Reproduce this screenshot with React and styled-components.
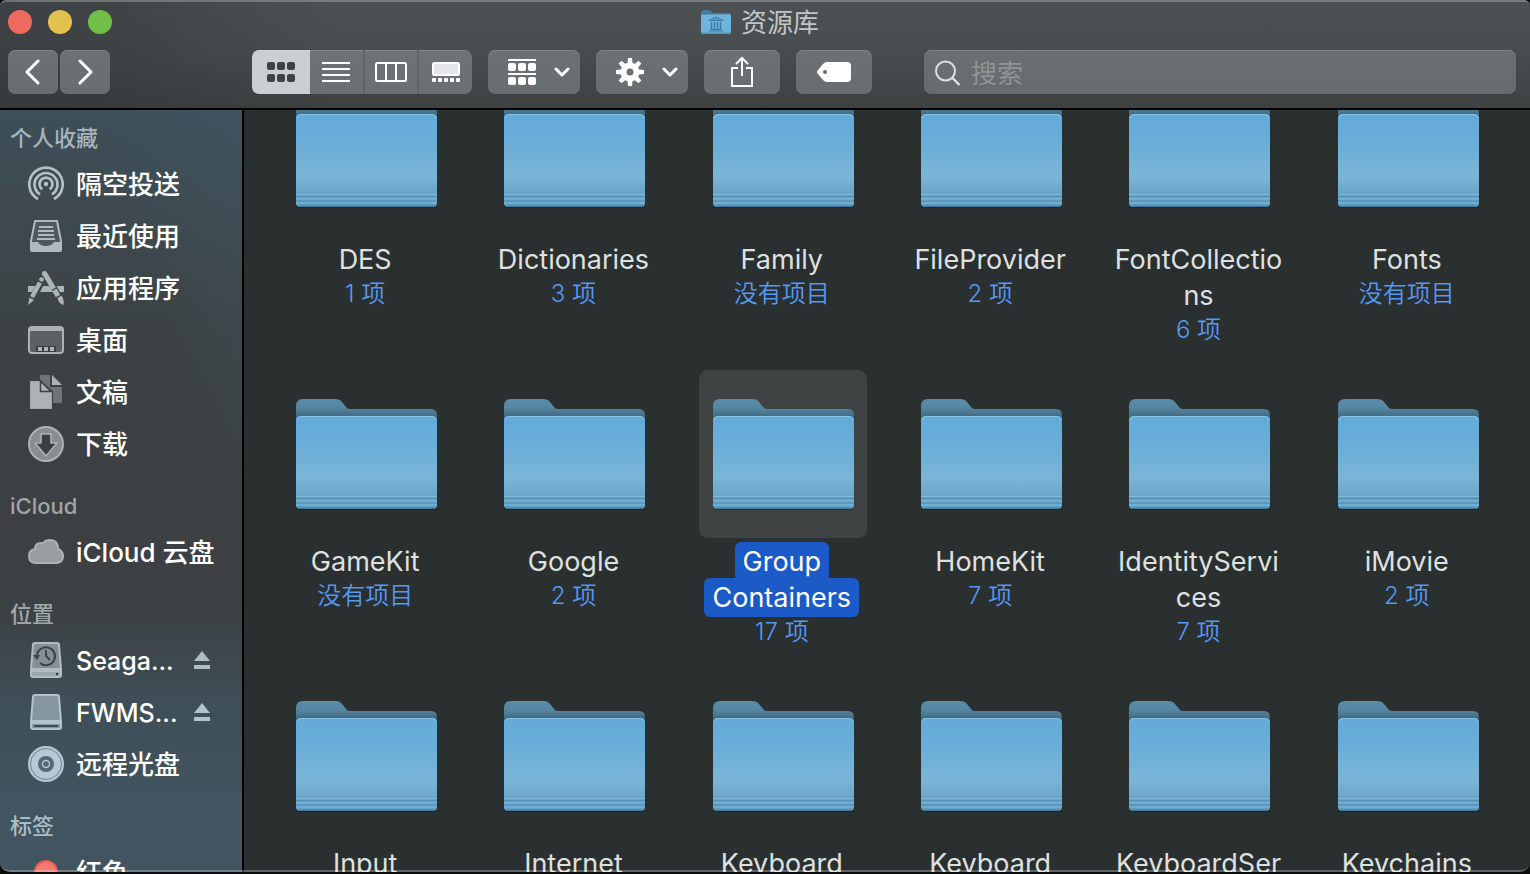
import React, { useLayoutEffect, useRef } from "react";
import styled, { createGlobalStyle } from "styled-components";

const GlobalStyle = createGlobalStyle`
  *, *::before, *::after { box-sizing: border-box; }
  html, body { margin: 0; background: #0b0c0c; }
  body, button, input {
    font-family: Inter, "Noto Sans CJK SC", sans-serif;
  }
  button { margin: 0; padding: 0; border: 0; color: inherit; background: none; }
  svg { display: block; flex: none; }
`;

const Window = styled.main`
  position: relative;
  display: flex;
  flex-direction: column;
  height: calc(100vh - 2px);
  border-radius: 6px 6px 10px 10px;
  overflow: hidden;
  background: #2a2f2f;
  &::after {
    content: "";
    position: absolute;
    inset: 0 -1px;
    border: 2px solid rgba(255, 255, 255, 0.25);
    border-width: 2px 1px;
    border-radius: inherit;
    pointer-events: none;
  }
`;

const Header = styled.header`
  flex: none;
  border-bottom: 2px solid #000;
  background:
    linear-gradient(90deg, rgba(44, 47, 49, 0.45) 0%, rgba(44, 47, 49, 0.35) 8%, rgba(44, 47, 49, 0) 22%),
    linear-gradient(180deg, #4c5153 0%, #474c4e 50%, #3d4142 100%);
`;

const TitleBar = styled.div`
  display: grid;
  grid-template-columns: 1fr auto 1fr;
  align-items: center;
  height: 44px;
  padding: 0 8px;
`;

const Lights = styled.div`
  display: flex;
  gap: 16px;
`;

const Light = styled.button`
  width: 24px;
  height: 24px;
  border-radius: 50%;
  background: ${(p) => p.$color};
`;

const Title = styled.h1`
  display: flex;
  align-items: center;
  gap: 10px;
  margin: 0;
  padding-right: 10px;
  font-size: 26px;
  line-height: 38px;
  font-weight: 400;
  color: #c3c6c7;
`;

const TitleText = styled.span`
  padding-top: 2px;
`;

const Toolbar = styled.div`
  display: flex;
  gap: 16px;
  padding: 6px 14px 14px 8px;
`;

const NavButtons = styled.div`
  display: flex;
  gap: 2px;
  margin-right: 126px;
`;

const ToolButton = styled.button`
  display: flex;
  align-items: center;
  justify-content: center;
  width: ${(p) => p.$width}px;
  height: 44px;
  border-radius: 7px;
  color: #fff;
  background: linear-gradient(#6c7173, #686d6f);
  box-shadow: inset 0 1px 0 rgba(255, 255, 255, 0.14);
`;

const MenuButton = styled(ToolButton)`
  gap: 18px;
  padding-left: 10px;
`;

const Segments = styled.div`
  display: flex;
  width: 220px;
  border-radius: 7px;
  overflow: hidden;
`;

const Segment = styled.button`
  display: flex;
  flex: ${(p) => (p.$active ? "0 0 58px" : "1")};
  align-items: center;
  justify-content: center;
  height: 44px;
  color: ${(p) => (p.$active ? "#3e4344" : "#fff")};
  background: ${(p) => (p.$active ? "#cbcfd1" : "linear-gradient(#6e7375, #6a6f71)")};
  box-shadow: inset 0 1px 0 rgba(255, 255, 255, 0.14);
  border-right: ${(p) => (p.$active ? "0" : "2px solid #5f6466")};
  &:last-child { border-right: 0; }
`;

const Search = styled.label`
  display: flex;
  flex: 1;
  align-items: center;
  gap: 10px;
  height: 44px;
  min-width: 0;
  margin-left: 36px;
  padding: 2px 10px 0;
  border-radius: 7px;
  color: #dfe1e2;
  background: linear-gradient(#6a6f71, #666b6d);
  box-shadow: inset 0 1px 0 rgba(255, 255, 255, 0.14);
`;

const SearchInput = styled.input`
  flex: 1;
  min-width: 0;
  height: 40px;
  padding: 0;
  border: 0;
  outline: 0;
  font-size: 26px;
  color: #fff;
  background: transparent;
  &::placeholder { color: #8f9395; opacity: 1; }
`;

const Body = styled.div`
  display: flex;
  flex: 1;
  min-height: 0;
`;

const Sidebar = styled.nav`
  display: flex;
  flex: none;
  flex-direction: column;
  gap: 16px;
  width: 244px;
  padding-top: 8px;
  border-right: 2px solid #000;
  overflow: hidden;
  background:
    linear-gradient(250deg, rgba(66, 90, 104, 0.4) 0%, rgba(66, 90, 104, 0) 30%),
    linear-gradient(180deg, #3d4f59 0%, #3e4a50 12%, #3c4345 27%, #3c4042 50%, #3c4144 66%, #3f4f58 78%, #41545f 90%, #42555f 100%);
`;

const Section = styled.section`
  flex: none;
`;

const SectionTitle = styled.h2`
  margin: 0;
  padding-left: 10px;
  font-size: 22px;
  line-height: 40px;
  font-weight: 500;
  color: ${(p) => p.$color};
`;

const List = styled.ul`
  margin: 0;
  padding: 0;
  list-style: none;
`;

const Item = styled.li`
  display: flex;
  align-items: center;
  justify-content: space-between;
  height: 52px;
  padding: 0 32px 0 28px;
  color: ${(p) => p.$tint};
`;

const ItemLink = styled.a`
  display: flex;
  align-items: center;
  gap: 12px;
  color: inherit;
  text-decoration: none;
  white-space: nowrap;
`;

const ItemName = styled.span`
  padding-top: 2px;
  font-size: ${(p) => (p.$drive ? 25 : 26)}px;
  line-height: 36px;
  font-weight: 500;
  color: #fff;
`;

const Tag = styled.span`
  width: 24px;
  height: 24px;
  margin: 0 6px;
  border: 2px solid #ee5d50;
  border-radius: 50%;
  background: #f27a70;
`;

const Files = styled.section`
  flex: 1;
  min-width: 0;
  overflow-y: auto;
  scrollbar-width: none;
`;

const FileGrid = styled.div`
  display: grid;
  grid-template-columns: repeat(6, minmax(0, 1fr));
  grid-auto-rows: 302px;
  padding: 18px;
`;

const File = styled.a`
  display: flex;
  flex-direction: column;
  align-items: center;
  color: #dfe0e0;
  text-align: center;
  text-decoration: none;
`;

const Tile = styled.span`
  display: block;
  margin-bottom: 6px;
  padding: 28px 13px;
  border-radius: 9px;
  background: ${(p) => (p.$selected ? "#404343" : "transparent")};
`;

const Caption = styled.span`
  display: flex;
  flex-direction: column;
  align-items: center;
  padding-right: 2px;
`;

const FileName = styled.span`
  width: 172px;
  font-size: 27px;
  line-height: 36px;
  overflow-wrap: anywhere;
`;

const Highlight = styled.span`
  padding: ${(p) => (p.$selected ? "3px 8px" : "0")};
  border-radius: 6px;
  color: ${(p) => (p.$selected ? "#fff" : "inherit")};
  background: ${(p) => (p.$selected ? "#1b5ac7" : "transparent")};
  box-decoration-break: clone;
  -webkit-box-decoration-break: clone;
`;

const Count = styled.span`
  font-size: 24px;
  line-height: 32px;
  font-weight: 350;
  color: #5698f2;
`;

const HiddenDefs = styled.svg`
  position: absolute;
`;

const FolderDefs = () => (
  <HiddenDefs width="0" height="0" aria-hidden="true">
    <defs>
      <linearGradient id="folderBack" x1="0" y1="0" x2="0" y2="1">
        <stop offset="0" stopColor="#5b8daa" />
        <stop offset="0.08" stopColor="#5586a3" />
        <stop offset="0.17" stopColor="#42697f" />
      </linearGradient>
      <linearGradient id="folderFront" x1="0" y1="0" x2="0" y2="1">
        <stop offset="0" stopColor="#62aada" />
        <stop offset="0.35" stopColor="#6bafd8" />
        <stop offset="0.66" stopColor="#7bb5d7" />
        <stop offset="0.84" stopColor="#6ca6c8" />
        <stop offset="1" stopColor="#5f9ec4" />
      </linearGradient>
    </defs>
  </HiddenDefs>
);

const FolderIcon = () => (
  <svg width="142" height="112" viewBox="0 0 142 112" aria-hidden="true">
    <path d="M1 109h141v2q0 1-3 1H4q-3 0-3-1z" fill="#000" opacity="0.25" />
    <path d="M1 107V8q0-7 7-7h32q5 0 7 3l5 6q1 1 3 1h81q6 0 6 6v90z" fill="url(#folderBack)" />
    <path d="M1 23q0-5 5-5h131q5 0 5 5v84q0 4-4 4H5q-4 0-4-4z" fill="url(#folderFront)" />
    <path d="M2 22q1-3.500 5-3.500h129q4 0 5 3.500" fill="none" stroke="#84c4e8" strokeWidth="1.200" />
    <path d="M1 98.500h141M1 103h141M1 107h141" stroke="#7cb8d9" strokeWidth="1" />
    <path d="M1 100.500h141M1 105h141" stroke="#5890b4" strokeWidth="1" />
    <path d="M2 109.500q1 1.500 3 1.500h133q2 0 3-1.500z" fill="#447c9f" />
  </svg>
);

const LibraryFolderIcon = () => (
  <svg width="30" height="24" viewBox="0 0 30 24" aria-hidden="true">
    <path d="M0 22V2q0-2 2-2h6q1.500 0 2.500 1.500t2 1.500H28q2 0 2 2v17z" fill="#4b7b9a" />
    <path d="M0 5.500q0-1 1-1h28q1 0 1 1V22q0 2-2 2H2q-2 0-2-2z" fill="#6fb4dd" />
    <path d="M0 22.500h30q0 1.500-2 1.500H2q-2 0-2-1.500z" fill="#5593b8" />
    <path d="M8 10.500 15 7l7 3.500z" fill="#5b9cc8" stroke="#3f7ba8" strokeWidth="1" />
    <path d="M10.500 12v7M13.500 12v7M16.500 12v7M19.500 12v7" stroke="#3f7ba8" strokeWidth="1.400" />
    <path d="M9 19.500h12M8 21h14" stroke="#3f7ba8" strokeWidth="1" />
  </svg>
);

const Chevron = ({ d, w, h, sw = 3 }) => (
  <svg width={w} height={h} viewBox={`0 0 ${w} ${h}`} fill="none" stroke="currentColor" strokeWidth={sw} strokeLinecap="round" strokeLinejoin="round" aria-hidden="true">
    <path d={d} />
  </svg>
);
const BackIcon = () => <Chevron w={16} h={26} d="M13 2 2 13l11 11" />;
const ForwardIcon = () => <Chevron w={16} h={26} d="M3 2l11 11L3 24" />;
const DownIcon = () => <Chevron w={16} h={10} d="M2 2l6 6 6-6" />;

const GridIcon = () => (
  <svg width="28" height="20" viewBox="0 0 28 20" fill="currentColor" aria-hidden="true">
    {[0, 12].map((y) => [0, 10, 20].map((x) => <rect key={`${x}-${y}`} x={x} y={y} width="8" height="8" rx="2" />))}
  </svg>
);
const ListIcon = () => (
  <svg width="28" height="20" viewBox="0 0 28 20" fill="currentColor" aria-hidden="true">
    <path d="M0 0h28v2H0zM0 6h28v2H0zM0 12h28v2H0zM0 18h28v2H0z" />
  </svg>
);
const ColumnsIcon = () => (
  <svg width="32" height="20" viewBox="0 0 32 20" fill="none" stroke="currentColor" strokeWidth="2" aria-hidden="true">
    <rect x="1" y="1" width="30" height="18" rx="1.500" />
    <path d="M11 1v18M21 1v18" />
  </svg>
);
const GalleryIcon = () => (
  <svg width="28" height="20" viewBox="0 0 28 20" fill="currentColor" aria-hidden="true">
    <rect x="1" y="1" width="26" height="12" rx="1.500" fill="#e3e7e9" stroke="#fff" strokeWidth="2" />
    {[0, 6, 12, 18, 24].map((x) => <rect key={x} x={x} y="16" width="4" height="4" rx="1" />)}
  </svg>
);
const GroupIcon = () => (
  <svg width="28" height="26" viewBox="0 0 28 26" fill="currentColor" aria-hidden="true">
    <path d="M0 0h28v2H0zM0 14h28v2H0z" />
    {[4, 18].map((y) => [0, 10, 20].map((x) => <rect key={`${x}-${y}`} x={x} y={y} width="8" height="8" rx="2" />))}
  </svg>
);
const GearIcon = () => (
  <svg width="28" height="28" viewBox="0 0 28 28" aria-hidden="true">
    <g fill="currentColor">
      {[0, 45, 90, 135, 180, 225, 270, 315].map((a) => (
        <path key={a} d="M11.300 7 12 0h4l.7 7z" transform={`rotate(${a} 14 14)`} />
      ))}
    </g>
    <circle cx="14" cy="14" r="6.500" fill="none" stroke="currentColor" strokeWidth="6" />
  </svg>
);
const ShareIcon = () => (
  <svg width="22" height="32" viewBox="0 0 22 32" fill="none" stroke="currentColor" strokeWidth="2" aria-hidden="true">
    <path d="M7 12H1v18h20V12h-6M11 20V3M5 8l6-6 6 6" />
  </svg>
);
const TagIcon = () => (
  <svg width="34" height="20" viewBox="0 0 34 20" fill="currentColor" aria-hidden="true">
    <path fillRule="evenodd" d="M10 0h20q4 0 4 4v12q0 4-4 4H10q-2 0-4-2l-5-6q-2-2 0-4l5-6q2-2 4-2zM8 8a2 2 0 1 0 0 4 2 2 0 1 0 0-4z" />
  </svg>
);
const SearchIcon = () => (
  <svg width="27" height="26" viewBox="0 0 27 26" fill="none" stroke="currentColor" strokeWidth="2" aria-hidden="true">
    <circle cx="11.500" cy="11" r="9.500" />
    <path d="M18 17.500 25.500 25" strokeWidth="2.400" />
  </svg>
);

const Icon = ({ children }) => (
  <svg width="36" height="36" viewBox="0 0 36 36" fill="currentColor" aria-hidden="true">{children}</svg>
);

const AirDropIcon = () => (
  <Icon>
    <g fill="none" stroke="currentColor" strokeWidth="2.700">
      <path d="M10 33A16.700 16.700 0 1 1 26 33" />
      <path d="M12 28.300A11.500 11.500 0 1 1 24 28.300" />
      <path d="M14.300 23.400A6.500 6.500 0 1 1 21.700 23.400" />
    </g>
    <circle cx="18" cy="18" r="2.200" />
  </Icon>
);
const RecentsIcon = () => (
  <Icon>
    <path d="M7 3h22l4 20v9q0 1-1 1H4q-1 0-1-1v-9z" fillOpacity="0.15" stroke="currentColor" strokeWidth="2" strokeLinejoin="round" />
    <path d="M3 24h7q2 4 8 4t8-4h7v8q0 2-2 2H5q-2 0-2-2z" />
    <path d="M11 8h14v2H11zM10 12h16v2H10zM10 16h16v2H10zM9 20h18v2H9z" />
  </Icon>
);
const AppsIcon = () => (
  <Icon>
    <path d="M0 16h7.500l-3.500 6H0zM15 16h6l4 6H12zM28.500 16H36v6h-4z" />
    <path d="M17 4 30 26" stroke="currentColor" strokeWidth="5" />
    <circle cx="16.500" cy="3.500" r="2.600" />
    <path d="m29.500 28 4-2.500q3 3 2 9.500-5-1.500-6-7z" />
    <circle cx="13.500" cy="9.500" r="2.300" />
    <path d="M12 12.500 4 27" stroke="currentColor" strokeWidth="4.400" />
    <path d="m1.500 27.500-1.500 7.500 6-5z" />
    <path d="m24 20.500 5-3M10.500 11l4.500 2.500" stroke="#3c4345" strokeWidth="1.200" />
  </Icon>
);
const DesktopIcon = () => (
  <Icon>
    <rect x="1" y="5" width="34" height="26" rx="3" fillOpacity="0.28" stroke="currentColor" strokeWidth="2" />
    <path d="M2 6h32v3H2z" />
    <path d="M8 24h20v6H8z" fill="#3a4042" />
    <path d="M10 25h4v4h-4zM16 25h4v4h-4zM22 25h4v4h-4z" />
  </Icon>
);
const DocumentsIcon = () => (
  <Icon>
    <path d="M12 1h10v12h12v16H12z" fillOpacity="0.45" />
    <path d="M24 1v10h10z" />
    <path d="M2 7h10l12 11v17H2z" stroke="#3b4042" strokeWidth="2" />
    <path d="M2 7h10v11h12v17H2z" fillOpacity="0.9" />
    <path d="M12.500 7v10.500H23z" stroke="#3b4042" strokeWidth="1.500" />
  </Icon>
);
const DownloadsIcon = () => (
  <Icon>
    <circle cx="18" cy="18" r="17" fillOpacity="0.68" stroke="currentColor" strokeWidth="2" />
    <path d="M13 8h10v9h6L18 30 7 17h6z" fill="#3a4042" stroke="currentColor" strokeWidth="1.600" strokeLinejoin="round" />
  </Icon>
);
const CloudIcon = () => (
  <Icon>
    <path d="M8 29q-7 0-7-7 0-6 6-7 0-6 6-6 1 0 2 .5Q17 6 22 6q8 0 8 9 5 2 5 7.500T29 29z" fillOpacity="0.82" stroke="currentColor" strokeWidth="2" />
  </Icon>
);
const DriveIcon = ({ clock }) => (
  <Icon>
    <path d="M7 1h22q2 0 2 2l2 24v6q0 2-2 2H5q-2 0-2-2v-6L5 3q0-2 2-2z" fillOpacity="0.62" stroke="currentColor" strokeWidth="2" />
    <path d="M3 26h30v4H3z" />
    {clock ? (
      <>
        <path d="M3 30h30v4H3z" fillOpacity="0.5" />
        <circle cx="29" cy="32" r="1.200" fill="#30383c" />
        <g fill="none" stroke="#3b4448" strokeWidth="2">
          <path d="M9 15a9 9 0 1 1 3 6" />
          <path d="M18 8v6l4 4" />
        </g>
        <path d="M5 13h7l-3 5z" fill="#3b4448" />
      </>
    ) : (
      <path d="M6 31h24v2H6z" fill="#3b4c55" />
    )}
  </Icon>
);
const DiscIcon = () => (
  <Icon>
    <circle cx="18" cy="18" r="17" stroke="currentColor" strokeWidth="2" />
    <circle cx="18" cy="18" r="15.500" fill="none" stroke="#6f8693" strokeWidth="1" />
    <circle cx="18" cy="18" r="8" fill="#526875" />
    <circle cx="18" cy="18" r="3.500" fill="none" stroke="currentColor" strokeWidth="1.400" />
  </Icon>
);
const EjectIcon = () => (
  <svg width="16" height="18" viewBox="0 0 16 18" fill="currentColor" aria-hidden="true">
    <path d="M8 0l8 10H0zM0 14h16v4H0z" />
  </svg>
);

const sections = [
  {
    title: "个人收藏",
    color: "#a7b4bb",
    items: [
      { name: "隔空投送", icon: <AirDropIcon />, tint: "#b3c0c7" },
      { name: "最近使用", icon: <RecentsIcon />, tint: "#b0babe" },
      { name: "应用程序", icon: <AppsIcon />, tint: "#adb4b7" },
      { name: "桌面", icon: <DesktopIcon />, tint: "#adb2b4" },
      { name: "文稿", icon: <DocumentsIcon />, tint: "#adb2b4" },
      { name: "下载", icon: <DownloadsIcon />, tint: "#adb2b4" },
    ],
  },
  {
    title: "iCloud",
    color: "#a0a4a6",
    items: [{ name: "iCloud 云盘", icon: <CloudIcon />, tint: "#aeb2b4" }],
  },
  {
    title: "位置",
    color: "#a0a7aa",
    items: [
      { name: "Seaga...", icon: <DriveIcon clock />, tint: "#b1bdc4", drive: true },
      { name: "FWMS...", icon: <DriveIcon />, tint: "#b3c3cc", drive: true },
      { name: "远程光盘", icon: <DiscIcon />, tint: "#b5c8d3" },
    ],
  },
  {
    title: "标签",
    color: "#a9bdc8",
    items: [{ name: "红色", icon: <Tag />, tint: "#b5c8d3" }],
  },
];

const files = [
  ["DES", "1 项"],
  ["Dictionaries", "3 项"],
  ["Family", "没有项目"],
  ["FileProvider", "2 项"],
  ["FontCollections", "6 项"],
  ["Fonts", "没有项目"],
  ["GameKit", "没有项目"],
  ["Google", "2 项"],
  ["Group Containers", "17 项", true],
  ["HomeKit", "7 项"],
  ["IdentityServices", "7 项"],
  ["iMovie", "2 项"],
  ["Input Methods", "1 项"],
  ["Internet Plug-Ins", "2 项"],
  ["Keyboard", "1 项"],
  ["Keyboard Layouts", "没有项目"],
  ["KeyboardServices", "1 项"],
  ["Keychains", "6 项"],
];

const views = [
  ["图标", GridIcon, true],
  ["列表", ListIcon],
  ["分栏", ColumnsIcon],
  ["画廊", GalleryIcon],
];

export default function App() {
  const filesRef = useRef(null);

  useLayoutEffect(() => {
    filesRef.current.scrollTop = 60;
  }, []);

  return (
    <>
      <GlobalStyle />
      <FolderDefs />
      <Window>
        <Header>
          <TitleBar>
            <Lights>
              <Light $color="#ee6a5e" aria-label="关闭" />
              <Light $color="#e2c14e" aria-label="最小化" />
              <Light $color="#72bf47" aria-label="缩放" />
            </Lights>
            <Title><LibraryFolderIcon /><TitleText>资源库</TitleText></Title>
          </TitleBar>
          <Toolbar>
            <NavButtons>
              <ToolButton $width={50} aria-label="后退"><BackIcon /></ToolButton>
              <ToolButton $width={50} aria-label="前进"><ForwardIcon /></ToolButton>
            </NavButtons>
            <Segments role="group" aria-label="显示方式">
              {views.map(([label, ViewIcon, active]) => (
                <Segment key={label} $active={active} aria-pressed={!!active} aria-label={label}><ViewIcon /></Segment>
              ))}
            </Segments>
            <MenuButton $width={92} aria-label="分组" aria-haspopup="menu"><GroupIcon /><DownIcon /></MenuButton>
            <MenuButton $width={92} aria-label="操作" aria-haspopup="menu"><GearIcon /><DownIcon /></MenuButton>
            <ToolButton $width={76} aria-label="共享"><ShareIcon /></ToolButton>
            <ToolButton $width={76} aria-label="编辑标签"><TagIcon /></ToolButton>
            <Search>
              <SearchIcon />
              <SearchInput type="search" placeholder="搜索" aria-label="搜索" />
            </Search>
          </Toolbar>
        </Header>
        <Body>
          <Sidebar aria-label="边栏">
            {sections.map((s) => (
              <Section key={s.title}>
                <SectionTitle $color={s.color}>{s.title}</SectionTitle>
                <List>
                  {s.items.map((it) => (
                    <Item key={it.name} $tint={it.tint}>
                      <ItemLink href="#">{it.icon}<ItemName $drive={it.drive}>{it.name}</ItemName></ItemLink>
                      {it.drive && <button aria-label="推出"><EjectIcon /></button>}
                    </Item>
                  ))}
                </List>
              </Section>
            ))}
          </Sidebar>
          <Files ref={filesRef} aria-label="资源库">
            <FileGrid>
              {files.map(([name, count, selected]) => (
                <File key={name} href="#">
                  <Tile $selected={selected}><FolderIcon /></Tile>
                  <Caption>
                    <FileName><Highlight $selected={selected}>{name}</Highlight></FileName>
                    <Count>{count}</Count>
                  </Caption>
                </File>
              ))}
            </FileGrid>
          </Files>
        </Body>
      </Window>
    </>
  );
}
